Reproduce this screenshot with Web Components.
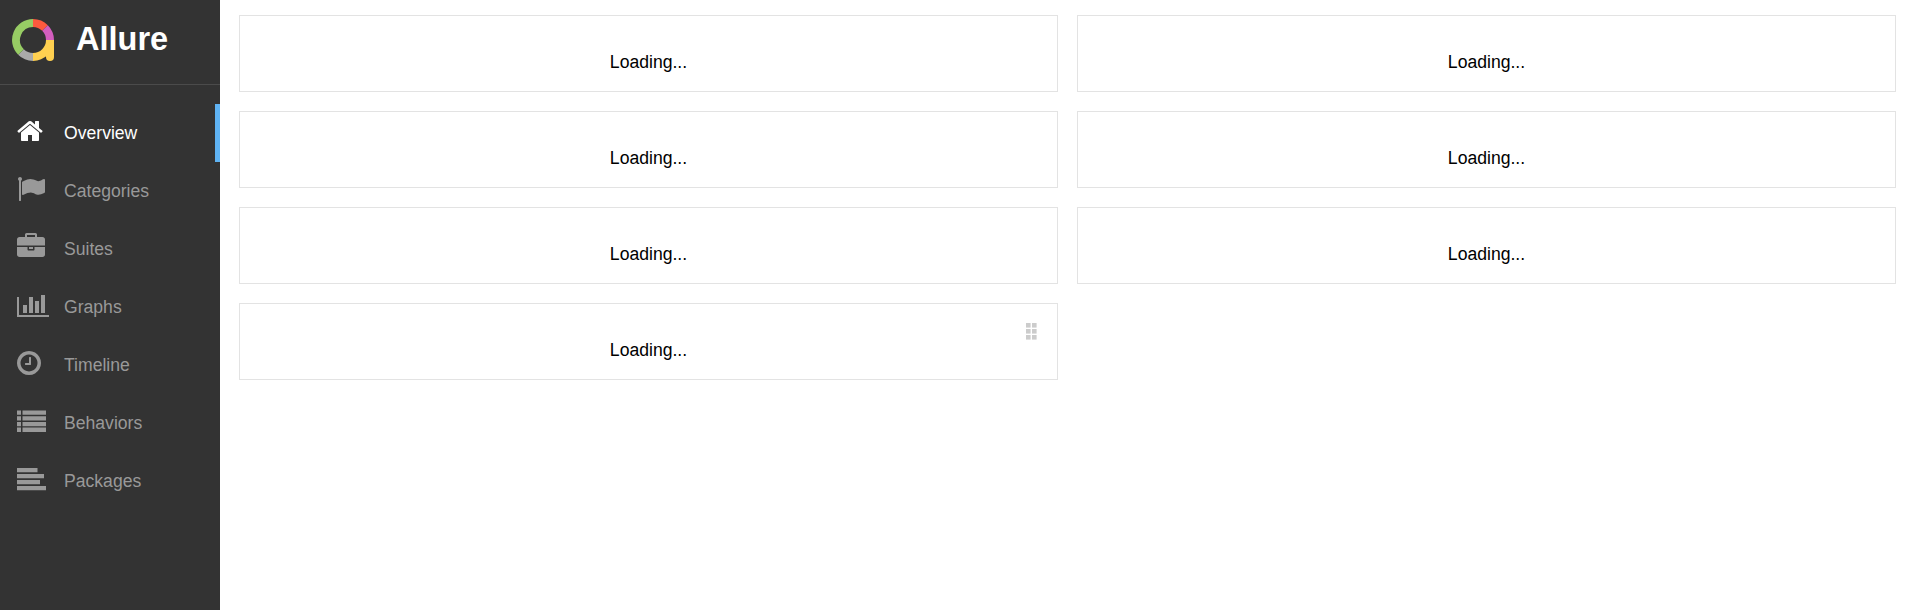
<!DOCTYPE html>
<html lang="en">

<head>
  <meta charset="UTF-8">
  <title>Allure Report</title>
  <style>
    html, body {
      margin: 0;
      height: 100%;
      background-color: #FFFFFF;
      font-family: 'Liberation Sans', Arial, sans-serif;
    }
  </style>
</head>

<body>
  <allure-app>
    <side-nav slot="nav">
      <nav-item icon="home" active>Overview</nav-item>
      <nav-item icon="flag">Categories</nav-item>
      <nav-item icon="briefcase">Suites</nav-item>
      <nav-item icon="chart">Graphs</nav-item>
      <nav-item icon="clock">Timeline</nav-item>
      <nav-item icon="list">Behaviors</nav-item>
      <nav-item icon="align">Packages</nav-item>
    </side-nav>
    <widget-grid>
      <widget-card>Loading...</widget-card>
      <widget-card>Loading...</widget-card>
      <widget-card>Loading...</widget-card>
      <widget-card>Loading...</widget-card>
      <widget-card>Loading...</widget-card>
      <widget-card>Loading...</widget-card>
      <widget-card handle>Loading...</widget-card>
    </widget-grid>
  </allure-app>

  <script>
    // font-awesome style icons, drawn on their own view boxes
    const ICONS = {
      home: { w: 28, box: '64 0 1792 1792', d: 'M1472 992v480q0 26-19 45t-45 19h-384v-384h-256v384h-384q-26 0-45-19t-19-45v-480q0-1 .5-3t.5-3l575-474 575 474q1 2 1 6zm223-69l-62 74q-8 9-21 11h-3q-13 0-21-7l-692-577-692 577q-12 8-24 7-13-2-21-11l-62-74q-8-10-7-23.5t11-21.5l719-599q32-26 76-26t76 26l244 204v-195q0-14 9-23t23-9h192q14 0 23 9t9 23v408l219 182q10 8 11 21.5t-7 23.5z' },
      flag: { w: 28, box: '0 0 1792 1792', d: 'M320 256q0 72-64 110v1266q0 13-9.5 22.5t-22.5 9.5h-64q-13 0-22.5-9.5t-9.5-22.5v-1266q-64-38-64-110 0-53 37.5-90.5t90.5-37.5 90.5 37.5 37.5 90.5zm1472 64v763q0 25-12.5 38.5t-39.5 27.5q-215 116-369 116-61 0-123.5-22t-108.5-48-115.5-48-142.5-22q-192 0-464 146-17 9-33 9-26 0-45-19t-19-45v-742q0-32 31-55 21-14 79-43 236-120 421-120 107 0 200 29t219 88q38 19 88 19 54 0 117.5-21t110-47 88-47 54.5-21q26 0 45 19t19 45z' },
      briefcase: { w: 29, box: '0 0 1792 1792', d: 'M640 256h512v-128h-512v128zm1152 640v480q0 66-47 113t-113 47h-1472q-66 0-113-47t-47-113v-480h672v160q0 26 19 45t45 19h320q26 0 45-19t19-45v-160h672zm-768 0v128h-256v-128h256zm768-480v384h-1792v-384q0-66 47-113t113-47h352v-160q0-40 28-68t68-28h576q40 0 68 28t28 68v160h352q66 0 113 47t47 113z' },
      chart: { w: 33, box: '0 0 2048 1792', d: 'M640 896v512h-256v-512h256zm384-512v1024h-256v-1024h256zm1024 1152v128h-2048v-1280h128v1152h1920zm-640-896v768h-256v-768h256zm384-384v1152h-256v-1152h256z' },
      clock: { w: 25, box: '128 0 1536 1792', d: 'M1024 544v448q0 14-9 23t-23 9h-320q-14 0-23-9t-9-23v-64q0-14 9-23t23-9h224v-352q0-14 9-23t23-9h64q14 0 23 9t9 23zm416 352q0-148-73-273t-198-198-273-73-273 73-198 198-73 273 73 273 198 198 273 73 273-73 198-198 73-273zm224 0q0 209-103 385.5t-279.5 279.5-385.5 103-385.5-103-279.5-279.5-103-385.5 103-385.5 279.5-279.5 385.5-103 385.5 103 279.5 279.5 103 385.5z' },
      list: { w: 29, box: '0 0 29 28', d: 'M0 3.500h4v4.300h-4zM5.500 3.500h23.500v4.300h-23.500zM0 9.200h4v4.300h-4zM5.500 9.200h23.500v4.300h-23.500zM0 14.900h4v4.300h-4zM5.500 14.900h23.500v4.300h-23.500zM0 20.600h4v4.300h-4zM5.500 20.600h23.500v4.300h-23.500z' },
      align: { w: 29, box: '0 0 29 28', d: 'M0 3h20.500v4.200h-20.500zM0 9h27v4.200h-27zM0 15h23v4.200h-23zM0 21h29v4.200h-29z' }
    };

    class AllureApp extends HTMLElement {
      constructor() {
        super();
        this.attachShadow({ mode: 'open' });
        this.shadowRoot.innerHTML = `
        <style>
          :host {
            display: flex;
            height: 100vh;
            overflow: hidden;
          }
          main {
            flex: 1;
            min-width: 0;
          }
        </style>
        <slot name="nav"></slot>
        <main><slot></slot></main>
      `;
      }
    }

    class BrandLogo extends HTMLElement {
      constructor() {
        super();
        this.attachShadow({ mode: 'open' });
        // ring goes clockwise from the top, radius 17 around 21,21
        this.shadowRoot.innerHTML = `
        <style>
          :host {
            display: flex;
            align-items: center;
            gap: 22px;
            box-sizing: border-box;
            height: 85px;
            padding: 0 0 4px 12px;
            border-bottom: 1px solid #4b4b4b;
          }
          svg { display: block; flex: none; }
          span {
            color: #FFFFFF;
            font-size: 32.5px;
            font-weight: 700;
            margin-bottom: 1px;
          }
        </style>
        <svg width="42" height="43" viewBox="0 0 42 43" fill="none" stroke-width="8">
          <path d="M21 4A17 17 0 0 1 33 9" stroke="#fd5a3e"/>
          <path d="M33 9A17 17 0 0 1 38 21" stroke="#d35ebe"/>
          <path d="M38 21A17 17 0 0 1 21 38" stroke="#ffd050"/>
          <path d="M21 38A17 17 0 0 1 9 33" stroke="#aaaaaa"/>
          <path d="M9 33A17 17 0 0 1 21 4" stroke="#97cc64"/>
          <rect x="34" y="21" width="8" height="21" rx="4" fill="#ffd050"/>
          <rect x="34" y="21" width="8" height="12" fill="#ffd050"/>
        </svg>
        <span>Allure</span>
      `;
      }
    }

    class SideNav extends HTMLElement {
      constructor() {
        super();
        this.attachShadow({ mode: 'open' });
        this.shadowRoot.innerHTML = `
        <style>
          :host {
            display: block;
            flex: none;
            width: 220px;
            height: 100%;
            background-color: #333333;
          }
          .items {
            display: flex;
            flex-direction: column;
            padding-top: 19px;
          }
        </style>
        <brand-logo></brand-logo>
        <div class="items"><slot></slot></div>
      `;
      }
    }

    class NavItem extends HTMLElement {
      constructor() {
        super();
        this.attachShadow({ mode: 'open' });
        const icon = ICONS[this.getAttribute('icon')];
        this.shadowRoot.innerHTML = `
        <style>
          :host {
            display: flex;
            align-items: center;
            box-sizing: border-box;
            height: 58px;
            padding-left: 17px;
            color: #999999;
            font-size: 17.6px;
          }
          :host([active]) {
            color: #FFFFFF;
            border-right: 5px solid #5fb3f3;
          }
          .icon {
            flex: none;
            width: 47px;
            margin-top: -4px;
          }
          svg { display: block; fill: currentColor; }
        </style>
        <div class="icon">
          <svg width="${icon.w}" height="28" viewBox="${icon.box}" preserveAspectRatio="xMinYMid meet"><path d="${icon.d}"/></svg>
        </div>
        <slot></slot>
      `;
      }
    }

    class WidgetGrid extends HTMLElement {
      constructor() {
        super();
        this.attachShadow({ mode: 'open' });
        this.shadowRoot.innerHTML = `
        <style>
          :host {
            display: grid;
            grid-template-columns: 1fr 1fr;
            gap: 19px;
            padding: 15px 15px 0 19px;
          }
        </style>
        <slot></slot>
      `;
      }
    }

    class WidgetCard extends HTMLElement {
      constructor() {
        super();
        this.attachShadow({ mode: 'open' });
        this.shadowRoot.innerHTML = `
        <style>
          :host {
            display: block;
            position: relative;
            box-sizing: border-box;
            height: 77px;
            padding-top: 36px;
            border: 1px solid #e3e3e3;
            color: #000000;
            font-size: 17.6px;
            line-height: 20px;
            text-align: center;
          }
          .handle {
            position: absolute;
            top: 19px;
            right: 20px;
            display: none;
            fill: #cccccc;
          }
          :host([handle]) .handle { display: block; }
        </style>
        <slot></slot>
        <svg class="handle" width="11" height="17" viewBox="0 0 11 17">
          <rect x="0" y="0" width="4.600" height="4.600"/><rect x="6" y="0" width="4.600" height="4.600"/>
          <rect x="0" y="6" width="4.600" height="4.600"/><rect x="6" y="6" width="4.600" height="4.600"/>
          <rect x="0" y="12" width="4.600" height="4.600"/><rect x="6" y="12" width="4.600" height="4.600"/>
        </svg>
      `;
      }
    }

    customElements.define('allure-app', AllureApp);
    customElements.define('brand-logo', BrandLogo);
    customElements.define('side-nav', SideNav);
    customElements.define('nav-item', NavItem);
    customElements.define('widget-grid', WidgetGrid);
    customElements.define('widget-card', WidgetCard);
  </script>
</body>

</html>
